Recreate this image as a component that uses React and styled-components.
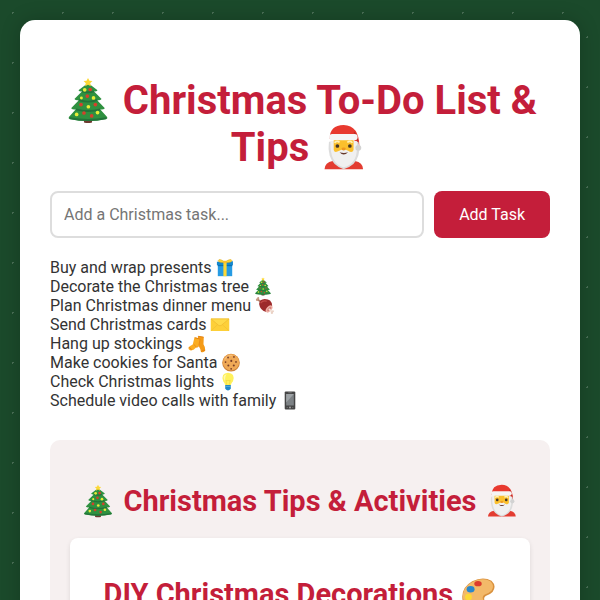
import React from 'react'
import styled, { createGlobalStyle } from 'styled-components'

const GlobalStyle = createGlobalStyle`
  * {
    box-sizing: border-box;
  }

  body {
    margin: 0;
    padding: 20px;
    min-height: 100vh;
    font-family: Roboto, sans-serif;
    font-size: 16px;
    line-height: 19px;
    color: #333333;
    background-color: #1b4a2b;
    background-image: radial-gradient(
        circle at 25% 25%,
        rgba(255, 255, 255, 0.2) 1px,
        transparent 1px
      ),
      radial-gradient(
        circle at 75% 75%,
        rgba(255, 255, 255, 0.2) 1px,
        transparent 1px
      );
    background-size: 50px 50px;
  }
`

const EmojiSvg = styled.svg`
  width: 20px;
  height: 19px;
  vertical-align: top;
`

const Container = styled.main`
  max-width: 800px;
  margin: 0 auto;
  padding: 57px 30px 30px;
  background: #ffffff;
  border-radius: 15px;
  box-shadow: 0 0 20px rgba(0, 0, 0, 0.2);
`

const Title = styled.h1`
  margin: 0 0 20px;
  font-size: 40px;
  line-height: 47px;
  text-align: center;
  color: #c41e3a;

  ${EmojiSvg} {
    width: 50px;
    height: 47px;
  }
`

const Heading = styled.h2`
  margin: 24px 0 20px;
  font-size: 29px;
  line-height: 34px;
  text-align: center;
  color: #c41e3a;

  ${EmojiSvg} {
    width: 36px;
    height: 34px;
  }
`

const TaskForm = styled.form`
  display: flex;
  gap: 10px;
  margin-bottom: 20px;
`

const TaskInput = styled.input`
  flex: 1;
  min-width: 0;
  padding: 12px;
  border: 2px solid #dddddd;
  border-radius: 8px;
  font: inherit;

  &::placeholder {
    color: #757575;
  }
`

const AddButton = styled.button`
  padding: 14px 25px;
  border: none;
  border-radius: 8px;
  background: #c41e3a;
  color: #ffffff;
  font: inherit;
  cursor: pointer;
`

const TaskList = styled.ul`
  margin: 0;
  padding: 0;
  list-style: none;
`

const TipsSection = styled.section`
  display: flow-root;
  margin-top: 30px;
  padding: 20px;
  border-radius: 10px;
  background: #f6f0f0;
`

const TipCard = styled.article`
  display: flow-root;
  padding: 15px;
  border-radius: 8px;
  background: #ffffff;
  box-shadow: 0 2px 5px rgba(0, 0, 0, 0.1);
`

const drawings = {
  tree: (
    <>
      <path d="M57 108h22v16q-11 3-22 0z" fill="#6d3b30" />
      <path d="M68 16L42 36q3 4 10 3L31 60q4 5 12 3L22 85q5 5 13 3L16 109q-3 4 3 6q49 10 98 0q6-2 3-6L101 88q8 2 13-3L93 63q8 2 12-3L84 39q7 1 10-3z" fill="#2f9140" />
      <path d="M52 39q16 5 32 0M43 63q25 8 50 0M35 88q33 9 66 0M18 112q50 10 100 0" fill="none" stroke="#23733a" strokeWidth="5" />
      <path d="M68 3l4 7 8 1-6 6 2 8-8-4-8 4 2-8-6-6 8-1z" fill="#fdd835" />
      <g fill="#d5402b">
        <circle cx="74" cy="34" r="5" />
        <circle cx="66" cy="52" r="5" />
        <circle cx="49" cy="75" r="5" />
        <circle cx="88" cy="75" r="5" />
        <circle cx="57" cy="98" r="5" />
        <circle cx="78" cy="106" r="5" />
      </g>
      <g fill="#e6ec39">
        <circle cx="59" cy="35" r="5" />
        <circle cx="50" cy="57" r="4" />
        <circle cx="83" cy="57" r="5" />
        <circle cx="69" cy="81" r="5" />
        <circle cx="37" cy="102" r="5" />
        <circle cx="94" cy="97" r="5" />
      </g>
    </>
  ),
  santa: (
    <>
      <path d="M15 123q1-18 22-22h61q21 4 22 22z" fill="#e33c31" />
      <path d="M29 40Q29 4 67 3q42 1 43 58h-9l-6-21z" fill="#e8392f" />
      <path d="M96 22q10 15 10 39" fill="none" stroke="#bd2d27" strokeWidth="4" />
      <path d="M27 48q-3 18 2 38 9 29 38 37 32-8 40-37 5-20 0-38z" fill="#dcdcdc" />
      <path d="M31 46q-1 32 8 49 9 18 28 23 21-5 30-23 9-17 6-49z" fill="#f0f0f0" />
      <path d="M40 40h54v31q-3 10-15 2-12-9-24 0-13 7-15-2z" fill="#fbc02d" />
      <path d="M42 51q7-7 14-1M77 50q8-6 14 1" fill="none" stroke="#fff1b5" strokeWidth="5" />
      <circle cx="50" cy="60" r="5" fill="#433526" />
      <circle cx="84" cy="60" r="5" fill="#433526" />
      <ellipse cx="67" cy="68" rx="6" ry="4" fill="#ee9820" />
      <path d="M56 77q11 12 23 0-11 4-23 0z" fill="#66382d" />
      <rect x="28" y="27" width="77" height="17" rx="8" fill="#f5f5f5" />
      <circle cx="107" cy="65" r="8" fill="#d2d2d2" />
    </>
  ),
  gift: (
    <>
      <path d="M13 25l109-3v26H13z" fill="#1487ce" />
      <path d="M19 46h98v77H19z" fill="#269be3" />
      <path d="M19 46h98v9H19z" fill="#0871b4" />
      <path d="M57 22h22v101H57z" fill="#fdd835" />
      <path d="M65 29Q24 33 22 17 28 0 65 25zM70 29q42 4 45-12Q108 0 70 25z" fill="#fdd835" stroke="#dba725" strokeWidth="4" />
      <rect x="58" y="18" width="20" height="17" rx="5" fill="#fbc02d" />
    </>
  ),
  meat: (
    <>
      <path d="M17 22l26 20" stroke="#b5806b" strokeWidth="12" strokeLinecap="round" />
      <circle cx="14" cy="25" r="8" fill="#c99a84" />
      <circle cx="22" cy="14" r="7" fill="#c99a84" />
      <path d="M28 54Q30 20 66 19q48 0 50 44-2 38-38 46Q34 98 28 54z" fill="#9c2a2b" />
      <path d="M41 45Q52 29 76 34" fill="none" stroke="#c04a47" strokeWidth="9" strokeLinecap="round" />
      <ellipse cx="96" cy="87" rx="29" ry="17" transform="rotate(-48 96 87)" fill="#efb2a7" />
      <ellipse cx="97" cy="88" rx="19" ry="9" transform="rotate(-48 97 88)" fill="#d9807c" />
      <path d="M98 90l18 17" stroke="#f1ddd1" strokeWidth="12" strokeLinecap="round" />
      <circle cx="115" cy="113" r="8" fill="#ead2c5" />
      <circle cx="122" cy="103" r="7" fill="#ead2c5" />
    </>
  ),
  envelope: (
    <>
      <rect x="5" y="23" width="126" height="86" rx="4" fill="#fdd038" />
      <path d="M7 106l47-43M129 106L82 63" stroke="#f2bd30" strokeWidth="4" />
      <path d="M7 26l51 43q10 8 20 0l51-43z" fill="#ffda48" stroke="#edb42a" strokeWidth="4" />
    </>
  ),
  socks: (
    <>
      <path d="M74 13l40 6-2 50q14 20 12 43-9 16-29 9-3-22-16-40z" fill="#f59b17" />
      <path d="M51 22l38 8-8 46q-4 16-21 17-14 18-34 18-20-4-15-21 7-9 28-20z" fill="#fbac22" />
      <path d="M53 25l34 8M77 15l36 6M13 91q14 2 17 18M97 119q9-12 26-9" fill="none" stroke="#e07d12" strokeWidth="6" />
      <path d="M49 70q4 14 17 19M89 33l-8 43q-3 12-10 14" fill="none" stroke="#e07d12" strokeWidth="4" />
    </>
  ),
  cookie: (
    <>
      <circle cx="68" cy="65" r="60" fill="#cc8139" />
      <circle cx="68" cy="62" r="56" fill="#efa957" />
      <path d="M25 44Q44 13 77 16" fill="none" stroke="#f8c17b" strokeWidth="7" />
      <g fill="#783e26">
        <circle cx="48" cy="30" r="6" />
        <circle cx="88" cy="26" r="6" />
        <circle cx="70" cy="53" r="7" />
        <circle cx="31" cy="61" r="6" />
        <circle cx="102" cy="60" r="6" />
        <circle cx="50" cy="84" r="7" />
        <circle cx="87" cy="85" r="7" />
        <circle cx="69" cy="107" r="6" />
      </g>
    </>
  ),
  bulb: (
    <>
      <path d="M50 92Q48 76 35 62 18 6 68 4q51 2 34 58-14 14-16 30z" fill="#fff15c" />
      <path d="M42 51Q29 20 59 14q-18 22-5 57z" fill="#fff9ae" />
      <path d="M60 88l-7-34 8 7 7-7 7 7 8-7-7 34" fill="none" stroke="#efd33c" strokeWidth="4" />
      <path d="M49 87h38v26q-19 24-38 0z" fill="#2189c9" />
      <path d="M50 98h36" stroke="#6dbbe3" strokeWidth="4" />
    </>
  ),
  phone: (
    <>
      <rect x="32" y="3" width="72" height="122" rx="7" fill="#454545" />
      <rect x="42" y="20" width="52" height="78" fill="#7d8285" />
      <path d="M42 20h52L42 78z" fill="#9da2a5" />
      <path d="M56 11h24" stroke="#8b8b8b" strokeWidth="4" />
      <circle cx="68" cy="112" r="7" fill="#a1a1a1" />
      <path d="M45 112h9M82 112h9" stroke="#888888" strokeWidth="4" />
    </>
  ),
  palette: (
    <>
      <path d="M10 90Q1 42 46 16 87-4 119 14q21 20 4 42-10 10-26 16-10 8-3 18 8 16-9 29-53 16-75-29z" fill="#d9913e" />
      <path d="M12 84Q5 40 49 18 88 0 116 17q16 18 3 35-9 9-25 14-13 8-6 20 10 17-7 26-48 13-69-28z" fill="#f3b969" />
      <ellipse cx="68" cy="25" rx="14" ry="10" fill="#dc3b2d" />
      <ellipse cx="40" cy="46" rx="15" ry="12" fill="#2887cb" />
      <ellipse cx="32" cy="75" rx="13" ry="12" fill="#fdd835" />
      <ellipse cx="51" cy="99" rx="14" ry="11" fill="#4b9b45" />
    </>
  ),
}

const tasks = [
  { text: 'Buy and wrap presents', emoji: 'gift' },
  { text: 'Decorate the Christmas tree', emoji: 'tree' },
  { text: 'Plan Christmas dinner menu', emoji: 'meat' },
  { text: 'Send Christmas cards', emoji: 'envelope' },
  { text: 'Hang up stockings', emoji: 'socks' },
  { text: 'Make cookies for Santa', emoji: 'cookie' },
  { text: 'Check Christmas lights', emoji: 'bulb' },
  { text: 'Schedule video calls with family', emoji: 'phone' },
]

function Emoji({ name }) {
  return (
    <EmojiSvg viewBox="0 0 136 128" role="img" aria-label={name}>
      {drawings[name]}
    </EmojiSvg>
  )
}

export default function App() {
  return (
    <>
      <GlobalStyle />
      <Container>
        <Title>
          <Emoji name="tree" /> Christmas To-Do List & Tips <Emoji name="santa" />
        </Title>
        <TaskForm onSubmit={(e) => e.preventDefault()}>
          <TaskInput
            type="text"
            aria-label="Add a Christmas task"
            placeholder="Add a Christmas task..."
          />
          <AddButton type="submit">Add Task</AddButton>
        </TaskForm>
        <TaskList>
          {tasks.map((task) => (
            <li key={task.text}>
              {task.text} <Emoji name={task.emoji} />
            </li>
          ))}
        </TaskList>
        <TipsSection>
          <Heading>
            <Emoji name="tree" /> Christmas Tips & Activities{' '}
            <Emoji name="santa" />
          </Heading>
          <TipCard>
            <Heading>
              DIY Christmas Decorations <Emoji name="palette" />
            </Heading>
          </TipCard>
        </TipsSection>
      </Container>
    </>
  )
}
